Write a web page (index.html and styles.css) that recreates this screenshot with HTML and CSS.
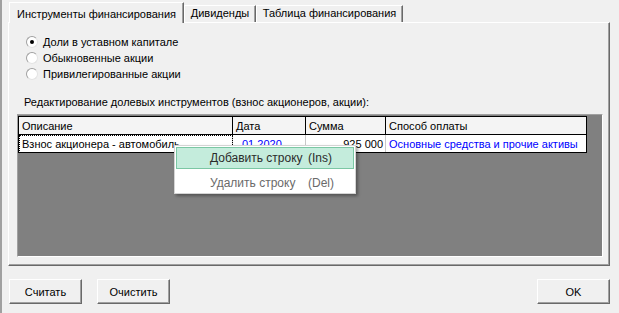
FILE: index.html
```html
<!DOCTYPE html>
<html>
  <head>
    <meta charset="UTF-8">
    <title>Инструменты финансирования</title>
    <link rel="stylesheet" href="styles.css">
  </head>
  <body>

    <div class="window">
      <div class="tabs">
        <div class="tab selected tab-main">Инструменты финансирования</div>
        <div class="tab tab-div">Дивиденды</div>
        <div class="tab tab-table">Таблица финансирования</div>
      </div>

      <div class="panel">
        <div class="options">
          <label class="option"><span class="radio checked"></span>Доли в уставном капитале</label>
          <label class="option"><span class="radio"></span>Обыкновенные акции</label>
          <label class="option"><span class="radio"></span>Привилегированные акции</label>
        </div>

        <div class="caption">Редактирование долевых инструментов (взнос акционеров, акции):</div>

        <div class="grid">
          <table>
            <colgroup>
              <col class="c-desc">
              <col class="c-date">
              <col class="c-sum">
              <col class="c-pay">
            </colgroup>
            <thead>
              <tr>
                <th>Описание</th>
                <th>Дата</th>
                <th>Сумма</th>
                <th>Способ оплаты</th>
              </tr>
            </thead>
            <tbody>
              <tr>
                <td class="focused">Взнос акционера - автомобиль</td>
                <td class="link date">01.2020</td>
                <td class="sum">925 000</td>
                <td class="link">Основные средства и прочие активы</td>
              </tr>
            </tbody>
          </table>
        </div>
      </div>

      <div class="buttons">
        <button class="button">Считать</button>
        <button class="button">Очистить</button>
        <button class="button ok">OK</button>
      </div>
    </div>

    <div class="menu">
      <div class="menu-item active"><span class="label">Добавить строку</span><span class="key">(Ins)</span></div>
      <div class="menu-item muted"><span class="label">Удалить строку</span><span class="key">(Del)</span></div>
    </div>

  </body>
</html>
```

FILE: styles.css
```css
html, body {
  height: 100%;
}

body {
  background: #f0f0f0;
  border-left: 2px solid #a0a0a0;
  box-sizing: border-box;
  color: #000;
  font-family: "Liberation Sans", Arial, sans-serif;
  font-size: 11px;
  margin: 0;
  overflow: hidden;
  position: relative;
}

.window {
  padding: 2px 9px 0 6px;
}

/* tabs */

.tabs {
  align-items: flex-end;
  display: flex;
  height: 20px;
  margin-left: 1px;
  position: relative;
  z-index: 1;
}

.tab {
  border-left: 1px solid #fff;
  border-top: 1px solid #fff;
  border-right: 1px solid #696969;
  box-shadow: inset -1px 0 #a0a0a0;
  box-sizing: border-box;
  height: 17px;
  line-height: 15px;
  text-align: center;
  white-space: nowrap;
}

.tab.selected {
  background: #f0f0f0;
  height: 21px;
  line-height: 22px;
  margin-bottom: -1px;
}

.tab-main { width: 175px; }
.tab-div { width: 72px; }
.tab-table { width: 147px; }

/* panel */

.panel {
  border-left: 1px solid #fff;
  border-top: 1px solid #fff;
  border-right: 1px solid #696969;
  border-bottom: 1px solid #696969;
  box-shadow: inset -1px -1px #a0a0a0;
  box-sizing: border-box;
  height: 244px;
}

.options {
  display: flex;
  flex-direction: column;
  padding: 11px 0 0 17px;
}

.option {
  align-items: center;
  display: flex;
  height: 16px;
}

.radio {
  background: #fff;
  border: 1px solid;
  border-color: #a0a0a0 #e3e3e3 #e3e3e3 #a0a0a0;
  border-radius: 50%;
  box-sizing: border-box;
  display: inline-flex;
  align-items: center;
  justify-content: center;
  height: 12px;
  margin-right: 5px;
  width: 12px;
}

.radio.checked::after {
  background: #000;
  border-radius: 50%;
  content: "";
  height: 4px;
  width: 4px;
}

.caption {
  line-height: 16px;
  margin-top: 12px;
  padding-left: 15px;
}

/* grid */

.grid {
  background: #808080;
  border: 1px solid;
  border-color: #a0a0a0 #fff #fff #a0a0a0;
  box-sizing: border-box;
  height: 143px;
  margin: 4px 6px 0 8px;
  padding-top: 1px;
}

table {
  border-collapse: collapse;
  font-size: 11px;
  table-layout: fixed;
  width: 568px;
}

.c-desc { width: 214px; }
.c-date { width: 73px; }
.c-sum { width: 80px; }
.c-pay { width: 201px; }

th, td {
  height: 17px;
  overflow: hidden;
  padding: 0 3px;
  text-align: left;
  white-space: nowrap;
}

th {
  background: #f4f4f4;
  border: 1px solid #000;
  font-weight: normal;
}

td {
  background: #fff;
  border-bottom: 1px solid #000;
  border-left: 1px solid #c8c8c8;
}

td:first-child {
  border-left: 1px solid #000;
}

td:last-child {
  border-right: 1px solid #000;
}

td.focused {
  outline: 1px dotted #000;
  outline-offset: -1px;
}

td.link {
  color: #0000ff;
}

td.date {
  padding-left: 9px;
}

td.sum {
  text-align: right;
  padding-right: 2px;
}

/* buttons */

.buttons {
  display: flex;
  margin-top: 13px;
  padding-left: 1px;
}

.button {
  background: #f0f0f0;
  border: 1px solid;
  border-color: #fff #696969 #696969 #fff;
  box-shadow: inset -1px -1px #a0a0a0;
  color: #000;
  font-family: "Liberation Sans", Arial, sans-serif;
  font-size: 11px;
  height: 25px;
  margin-right: 15px;
  padding: 0;
  width: 73px;
}

.button.ok {
  margin-left: auto;
  margin-right: 0;
}

/* context menu */

.menu {
  background: #fff;
  border: 1px solid #d4d4d4;
  box-shadow: 2px 2px 3px rgba(0, 0, 0, 0.35);
  box-sizing: border-box;
  font-size: 12px;
  height: 49px;
  left: 172px;
  padding: 1px;
  position: absolute;
  top: 145px;
  width: 182px;
}

.menu-item {
  border: 1px solid transparent;
  display: flex;
  height: 20px;
  line-height: 20px;
  margin-bottom: 3px;
}

.menu-item.active {
  background: #c4ecdc;
  border-color: #7bc7a4;
  color: #2b2b2b;
}

.menu-item.muted {
  color: #6a6a6a;
}

.menu-item .label {
  padding-left: 33px;
  width: 98px;
}
```
